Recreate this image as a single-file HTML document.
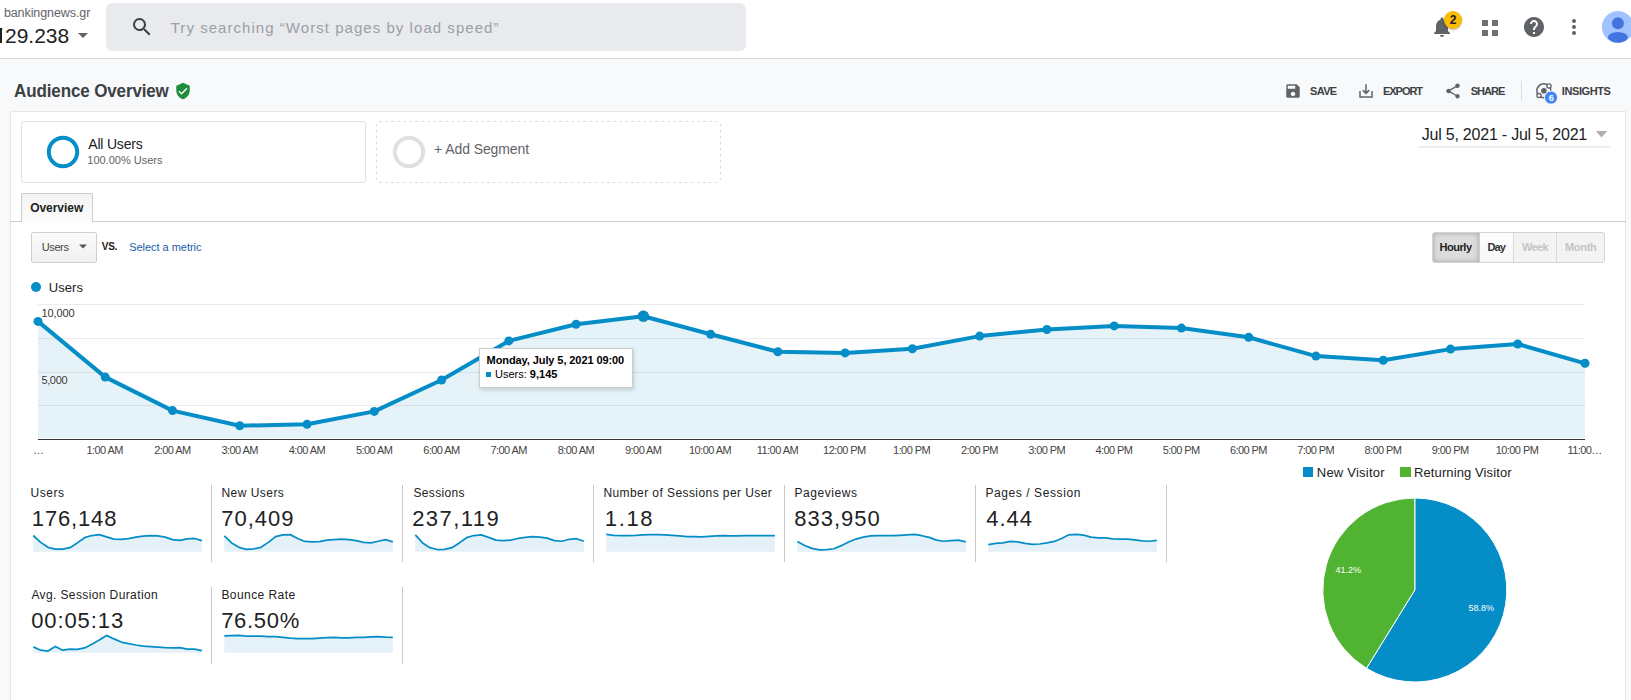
<!DOCTYPE html>
<html><head><meta charset="utf-8"><style>
html,body{margin:0;padding:0;}
body{width:1631px;height:700px;overflow:hidden;position:relative;background:#fff;font-family:"Liberation Sans", sans-serif;}
.t{position:absolute;white-space:nowrap;}
</style></head><body>
<div style="position:absolute;left:0px;top:0px;width:1631px;height:58px;background:#fff;"></div>
<div style="position:absolute;left:0px;top:58px;width:1631px;height:1px;background:#dadce0;"></div>
<div style="position:absolute;left:0px;top:59px;width:1631px;height:641px;background:#f8f9fa;"></div>
<div class="t" style="left:3.90px;top:7.02px;font-size:12.5px;line-height:12.5px;color:#5f6368;font-weight:normal;letter-spacing:-0.085px;">bankingnews.gr</div>
<div class="t" style="left:5.00px;top:25.02px;font-size:21px;line-height:21px;color:#202124;font-weight:normal;letter-spacing:0.000px;">29.238</div>
<div style="position:absolute;left:0.4px;top:28.4px;width:1.8px;height:14.4px;background:#202124;"></div>
<svg style="position:absolute;left:0;top:27px" width="4" height="6"><path d="M2.2 1.4 L-1 3.6" stroke="#202124" stroke-width="1.8"/></svg>
<svg style="position:absolute;left:77px;top:32px" width="12" height="8"><path d="M1 1 L11 1 L6 6 Z" fill="#5f6368"/></svg>
<div style="position:absolute;left:106px;top:3px;width:640px;height:48px;background:#e8eaed;border-radius:6px;"></div>
<svg style="position:absolute;left:130px;top:15px" width="24" height="24" viewBox="0 0 24 24"><path fill="#3c4043" d="M15.5 14h-.79l-.28-.27A6.471 6.471 0 0 0 16 9.5 6.5 6.5 0 1 0 9.5 16c1.61 0 3.09-.59 4.23-1.57l.27.28v.79l5 4.99L20.49 19l-4.99-5zm-6 0C7.01 14 5 11.99 5 9.5S7.01 5 9.5 5 14 7.01 14 9.5 11.99 14 9.5 14z"/></svg>
<div class="t" style="left:170.70px;top:19.50px;font-size:15px;line-height:15px;color:#9aa0a6;font-weight:normal;letter-spacing:1.045px;">Try searching “Worst pages by load speed”</div>
<svg style="position:absolute;left:1430px;top:15px" width="24" height="24" viewBox="0 0 24 24"><path fill="#5f6368" d="M12 22c1.1 0 2-.9 2-2h-4c0 1.1.9 2 2 2zm6-6v-5c0-3.07-1.64-5.64-4.5-6.32V4c0-.83-.67-1.5-1.5-1.5s-1.5.67-1.5 1.5v.68C7.63 5.36 6 7.92 6 11v5l-2 2v1h16v-1l-2-2z"/></svg>
<div style="position:absolute;left:1444px;top:11px;width:18px;height:18px;border-radius:50%;background:#fbbc04;box-shadow:0 1px 2px rgba(0,0,0,.3);"></div>
<div class="t" style="left:1153.20px;width:600px;text-align:center;top:14.44px;font-size:12px;line-height:12px;color:#202124;font-weight:bold;letter-spacing:0.000px;">2</div>
<div style="position:absolute;left:1482px;top:20px;width:6px;height:6px;background:#6f6f6f;"></div>
<div style="position:absolute;left:1492px;top:20px;width:6px;height:6px;background:#6f6f6f;"></div>
<div style="position:absolute;left:1482px;top:30px;width:6px;height:6px;background:#6f6f6f;"></div>
<div style="position:absolute;left:1492px;top:30px;width:6px;height:6px;background:#6f6f6f;"></div>
<svg style="position:absolute;left:1522px;top:15px" width="24" height="24" viewBox="0 0 24 24"><path fill="#5f6368" d="M12 2C6.48 2 2 6.48 2 12s4.48 10 10 10 10-4.48 10-10S17.52 2 12 2zm1 17h-2v-2h2v2zm2.07-7.75l-.9.92C13.45 12.9 13 13.5 13 15h-2v-.5c0-1.1.45-2.1 1.17-2.83l1.24-1.26c.37-.36.59-.86.59-1.41 0-1.1-.9-2-2-2s-2 .9-2 2H8c0-2.21 1.79-4 4-4s4 1.79 4 4c0 .88-.36 1.68-.93 2.25z"/></svg>
<div style="position:absolute;left:1572px;top:18.7px;width:4px;height:4px;background:#5f6368;border-radius:50%;"></div>
<div style="position:absolute;left:1572px;top:24.9px;width:4px;height:4px;background:#5f6368;border-radius:50%;"></div>
<div style="position:absolute;left:1572px;top:31.1px;width:4px;height:4px;background:#5f6368;border-radius:50%;"></div>
<svg style="position:absolute;left:1601px;top:11px" width="32" height="32" viewBox="0 0 32 32"><circle cx="16.9" cy="16" r="16" fill="#a0c3ff"/><circle cx="16.9" cy="12.2" r="6" fill="#4374e0"/><ellipse cx="16.9" cy="26.3" rx="10" ry="5.4" fill="#4374e0"/></svg>
<div class="t" style="left:14.10px;top:82.61px;font-size:17px;line-height:17px;color:#3c4043;font-weight:bold;letter-spacing:-0.131px;transform:scaleY(1.08);transform-origin:0 14.4px;">Audience Overview</div>
<svg style="position:absolute;left:174px;top:82px" width="18" height="18" viewBox="0 0 24 24"><path fill="#1e8e3e" d="M12 1L3 5v6c0 5.55 3.84 10.74 9 12 5.16-1.26 9-6.45 9-12V5l-9-4zm-2 16l-4-4 1.41-1.41L10 14.17l6.59-6.59L18 9l-8 8z"/></svg>
<svg style="position:absolute;left:1284px;top:82px" width="18" height="18" viewBox="0 0 24 24"><path fill="#5f6368" d="M17 3H5c-1.11 0-2 .9-2 2v14c0 1.1.89 2 2 2h14c1.1 0 2-.9 2-2V7l-4-4zm-5 16c-1.66 0-3-1.34-3-3s1.34-3 3-3 3 1.34 3 3-1.34 3-3 3zm3-10H5V5h10v4z"/></svg>
<div class="t" style="left:1310.10px;top:85.89px;font-size:11px;line-height:11px;color:#3c4043;font-weight:bold;letter-spacing:-0.700px;">SAVE</div>
<svg style="position:absolute;left:1357px;top:82px" width="18" height="18" viewBox="0 0 24 24"><path fill="#5f6368" d="M19 12v7H5v-7H3v9h18v-9h-2zm-6 .67l2.59-2.58L17 11.5l-5 5-5-5 1.41-1.41L11 12.67V3h2v9.67z"/></svg>
<div class="t" style="left:1383.00px;top:85.89px;font-size:11px;line-height:11px;color:#3c4043;font-weight:bold;letter-spacing:-1.040px;">EXPORT</div>
<svg style="position:absolute;left:1444px;top:82px" width="18" height="18" viewBox="0 0 24 24"><path fill="#5f6368" d="M18 16.08c-.76 0-1.44.3-1.96.77L8.91 12.7c.05-.23.09-.46.09-.7s-.04-.47-.09-.7l7.05-4.11c.54.5 1.25.81 2.04.81 1.66 0 3-1.34 3-3s-1.34-3-3-3-3 1.34-3 3c0 .24.04.47.09.7L8.04 9.81C7.5 9.31 6.79 9 6 9c-1.66 0-3 1.34-3 3s1.34 3 3 3c.79 0 1.5-.31 2.04-.81l7.12 4.16c-.05.21-.08.43-.08.65 0 1.61 1.31 2.92 2.92 2.92s2.92-1.31 2.92-2.92-1.31-2.92-2.92-2.92z"/></svg>
<div class="t" style="left:1470.70px;top:85.89px;font-size:11px;line-height:11px;color:#3c4043;font-weight:bold;letter-spacing:-0.975px;">SHARE</div>
<div style="position:absolute;left:1521px;top:81px;width:1px;height:20px;background:#dadce0;"></div>
<svg style="position:absolute;left:1530px;top:78px" width="32" height="28" viewBox="0 0 32 28"><circle cx="13.8" cy="12.8" r="7" fill="none" stroke="#5f6368" stroke-width="1.5"/><circle cx="13.9" cy="12.8" r="2.8" fill="#5f6368"/><circle cx="9" cy="17.6" r="2.1" fill="#f8f9fa" stroke="#5f6368" stroke-width="1.3"/><circle cx="19" cy="8" r="2.1" fill="#f8f9fa" stroke="#5f6368" stroke-width="1.3"/><circle cx="21" cy="19.6" r="6.6" fill="#4285f4" stroke="#f8f9fa" stroke-width="1"/></svg>
<div class="t" style="left:1251.20px;width:600px;text-align:center;top:94.18px;font-size:9px;line-height:9px;color:#fff;font-weight:bold;letter-spacing:0.000px;">6</div>
<div class="t" style="left:1561.80px;top:85.89px;font-size:11px;line-height:11px;color:#3c4043;font-weight:bold;letter-spacing:-0.400px;">INSIGHTS</div>
<div style="position:absolute;left:10px;top:111px;width:1616px;height:600px;background:#fff;border:1px solid #e6e6e6;box-sizing:border-box;"></div>
<div style="position:absolute;left:21px;top:121px;width:345px;height:62px;border:1px solid #e0e0e0;border-radius:3px;box-sizing:border-box;"></div>
<svg style="position:absolute;left:43px;top:132px" width="40" height="40"><circle cx="20" cy="20" r="14.2" fill="none" stroke="#058dc7" stroke-width="4"/></svg>
<div class="t" style="left:88.30px;top:137.45px;font-size:14px;line-height:14px;color:#202124;font-weight:normal;letter-spacing:-0.200px;">All Users</div>
<div class="t" style="left:87.30px;top:154.79px;font-size:11px;line-height:11px;color:#5f6368;font-weight:normal;letter-spacing:0.000px;">100.00% Users</div>
<svg style="position:absolute;left:370px;top:115px" width="360" height="75"><rect x="6.5" y="6.5" width="344" height="61" rx="3" fill="none" stroke="#d9d9d9" stroke-width="1" stroke-dasharray="2.5 3.5"/></svg>
<svg style="position:absolute;left:389px;top:132px" width="40" height="40"><circle cx="20" cy="20" r="14.2" fill="none" stroke="#e0e0e0" stroke-width="4"/></svg>
<div class="t" style="left:434.10px;top:142.45px;font-size:14px;line-height:14px;color:#5f6368;font-weight:normal;letter-spacing:-0.092px;">+ Add Segment</div>
<div class="t" style="left:1421.70px;top:126.76px;font-size:16px;line-height:16px;color:#202124;font-weight:normal;letter-spacing:-0.217px;">Jul 5, 2021 - Jul 5, 2021</div>
<svg style="position:absolute;left:1595px;top:130px" width="13" height="9"><path d="M0.8 1 L12.2 1 L6.5 7.4 Z" fill="#b0b0b0"/></svg>
<div style="position:absolute;left:1419px;top:146px;width:191px;height:2px;background:#eeeeee;"></div>
<div style="position:absolute;left:21px;top:193px;width:72px;height:29px;background:linear-gradient(#f3f3f3,#fcfcfc);border:1px solid #cccccc;border-bottom:none;border-radius:2px 2px 0 0;box-sizing:border-box;"></div>
<div style="position:absolute;left:10px;top:221px;width:1616px;height:1px;background:#cccccc;"></div>
<div style="position:absolute;left:22px;top:221px;width:70px;height:1px;background:#fff;"></div>
<div class="t" style="left:30.20px;top:202.14px;font-size:12px;line-height:12px;color:#222;font-weight:bold;letter-spacing:-0.043px;">Overview</div>
<div style="position:absolute;left:31px;top:232px;width:66px;height:31px;background:linear-gradient(#fafafa,#f1f1f1);border:1px solid #cfcfcf;border-radius:2px;box-sizing:border-box;"></div>
<div class="t" style="left:41.70px;top:241.79px;font-size:11px;line-height:11px;color:#444;font-weight:normal;letter-spacing:-0.375px;">Users</div>
<svg style="position:absolute;left:79px;top:244px" width="9" height="6"><path d="M0 0.5 L8 0.5 L4 4.5 Z" fill="#555"/></svg>
<div class="t" style="left:101.80px;top:241.84px;font-size:10px;line-height:10px;color:#222;font-weight:bold;letter-spacing:-0.300px;">VS.</div>
<div class="t" style="left:129.20px;top:241.79px;font-size:11px;line-height:11px;color:#1a5ea8;font-weight:normal;letter-spacing:-0.029px;">Select a metric</div>
<div style="position:absolute;left:1432px;top:232px;width:173px;height:31px;border:1px solid #d4d4d4;border-radius:3px;background:#f3f3f3;box-sizing:border-box;"></div>
<div style="position:absolute;left:1433px;top:233px;width:46px;height:29px;background:#dcdcdc;box-shadow:inset 0 0 5px rgba(0,0,0,.28);border-radius:2px 0 0 2px;"></div>
<div style="position:absolute;left:1479px;top:233px;width:34px;height:29px;background:linear-gradient(#fefefe,#f6f6f6);"></div>
<div style="position:absolute;left:1479px;top:233px;width:1px;height:29px;background:#cfcfcf;"></div>
<div style="position:absolute;left:1513px;top:233px;width:1px;height:29px;background:#d9d9d9;"></div>
<div style="position:absolute;left:1556px;top:233px;width:1px;height:29px;background:#d9d9d9;"></div>
<div class="t" style="left:1439.50px;top:241.89px;font-size:11px;line-height:11px;color:#222;font-weight:bold;letter-spacing:-0.460px;">Hourly</div>
<div class="t" style="left:1487.50px;top:241.89px;font-size:11px;line-height:11px;color:#333;font-weight:bold;letter-spacing:-0.900px;">Day</div>
<div class="t" style="left:1522.00px;top:241.89px;font-size:11px;line-height:11px;color:#c4c4c4;font-weight:bold;letter-spacing:-0.600px;">Week</div>
<div class="t" style="left:1565.00px;top:241.89px;font-size:11px;line-height:11px;color:#c4c4c4;font-weight:bold;letter-spacing:-0.325px;">Month</div>
<div style="position:absolute;left:31px;top:282px;width:10px;height:10px;border-radius:50%;background:#058dc7;"></div>
<div class="t" style="left:48.80px;top:281.30px;font-size:13px;line-height:13px;color:#222;font-weight:normal;letter-spacing:0.050px;">Users</div>
<svg style="position:absolute;left:0;top:0" width="1631" height="700"><rect x="38" y="304.0" width="1547" height="1" fill="#ebebeb"/><rect x="38" y="338.0" width="1547" height="1" fill="#ebebeb"/><rect x="38" y="372.0" width="1547" height="1" fill="#ebebeb"/><rect x="38" y="405.0" width="1547" height="1" fill="#ebebeb"/><polygon points="38,438 38.00,321.40 105.26,377.10 172.52,410.60 239.78,425.70 307.04,424.30 374.30,411.40 441.57,380.00 508.83,340.90 576.09,324.20 643.35,316.20 710.61,334.20 777.87,351.70 845.13,352.90 912.39,348.80 979.65,336.10 1046.91,329.50 1114.17,325.90 1181.43,328.10 1248.70,337.30 1315.96,356.10 1383.22,360.20 1450.48,349.10 1517.74,344.00 1585.00,363.30 1585,438" fill="#058dc7" fill-opacity="0.105"/><polyline points="38.00,321.40 105.26,377.10 172.52,410.60 239.78,425.70 307.04,424.30 374.30,411.40 441.57,380.00 508.83,340.90 576.09,324.20 643.35,316.20 710.61,334.20 777.87,351.70 845.13,352.90 912.39,348.80 979.65,336.10 1046.91,329.50 1114.17,325.90 1181.43,328.10 1248.70,337.30 1315.96,356.10 1383.22,360.20 1450.48,349.10 1517.74,344.00 1585.00,363.30" fill="none" stroke="#058dc7" stroke-width="4" stroke-linejoin="round"/><circle cx="38.00" cy="321.40" r="4.5" fill="#058dc7"/><circle cx="105.26" cy="377.10" r="4.5" fill="#058dc7"/><circle cx="172.52" cy="410.60" r="4.5" fill="#058dc7"/><circle cx="239.78" cy="425.70" r="4.5" fill="#058dc7"/><circle cx="307.04" cy="424.30" r="4.5" fill="#058dc7"/><circle cx="374.30" cy="411.40" r="4.5" fill="#058dc7"/><circle cx="441.57" cy="380.00" r="4.5" fill="#058dc7"/><circle cx="508.83" cy="340.90" r="4.5" fill="#058dc7"/><circle cx="576.09" cy="324.20" r="4.5" fill="#058dc7"/><circle cx="643.35" cy="316.20" r="5.6" fill="#058dc7" stroke="rgba(0,0,0,0.12)" stroke-width="1"/><circle cx="710.61" cy="334.20" r="4.5" fill="#058dc7"/><circle cx="777.87" cy="351.70" r="4.5" fill="#058dc7"/><circle cx="845.13" cy="352.90" r="4.5" fill="#058dc7"/><circle cx="912.39" cy="348.80" r="4.5" fill="#058dc7"/><circle cx="979.65" cy="336.10" r="4.5" fill="#058dc7"/><circle cx="1046.91" cy="329.50" r="4.5" fill="#058dc7"/><circle cx="1114.17" cy="325.90" r="4.5" fill="#058dc7"/><circle cx="1181.43" cy="328.10" r="4.5" fill="#058dc7"/><circle cx="1248.70" cy="337.30" r="4.5" fill="#058dc7"/><circle cx="1315.96" cy="356.10" r="4.5" fill="#058dc7"/><circle cx="1383.22" cy="360.20" r="4.5" fill="#058dc7"/><circle cx="1450.48" cy="349.10" r="4.5" fill="#058dc7"/><circle cx="1517.74" cy="344.00" r="4.5" fill="#058dc7"/><circle cx="1585.00" cy="363.30" r="4.5" fill="#058dc7"/><rect x="38" y="439" width="1547" height="1" fill="#333"/></svg>
<div class="t" style="left:41.60px;top:307.99px;font-size:11px;line-height:11px;color:#333;font-weight:normal;letter-spacing:-0.140px;text-shadow:0 0 2px #fff,0 0 2px #fff;">10,000</div>
<div class="t" style="left:41.40px;top:374.69px;font-size:11px;line-height:11px;color:#333;font-weight:normal;letter-spacing:-0.350px;text-shadow:0 0 2px #fff,0 0 2px #fff;">5,000</div>
<div class="t" style="left:33px;top:444.69px;font-size:11px;line-height:11px;color:#444;font-weight:normal;letter-spacing:0.000px;">…</div>
<div class="t" style="left:86.42px;top:444.89px;font-size:11px;line-height:11px;color:#444;font-weight:normal;letter-spacing:-0.552px;">1:00 AM</div>
<div class="t" style="left:154.22px;top:444.89px;font-size:11px;line-height:11px;color:#444;font-weight:normal;letter-spacing:-0.567px;">2:00 AM</div>
<div class="t" style="left:221.48px;top:444.89px;font-size:11px;line-height:11px;color:#444;font-weight:normal;letter-spacing:-0.567px;">3:00 AM</div>
<div class="t" style="left:288.74px;top:444.89px;font-size:11px;line-height:11px;color:#444;font-weight:normal;letter-spacing:-0.567px;">4:00 AM</div>
<div class="t" style="left:356.00px;top:444.89px;font-size:11px;line-height:11px;color:#444;font-weight:normal;letter-spacing:-0.567px;">5:00 AM</div>
<div class="t" style="left:423.27px;top:444.89px;font-size:11px;line-height:11px;color:#444;font-weight:normal;letter-spacing:-0.567px;">6:00 AM</div>
<div class="t" style="left:490.53px;top:444.89px;font-size:11px;line-height:11px;color:#444;font-weight:normal;letter-spacing:-0.567px;">7:00 AM</div>
<div class="t" style="left:557.79px;top:444.89px;font-size:11px;line-height:11px;color:#444;font-weight:normal;letter-spacing:-0.567px;">8:00 AM</div>
<div class="t" style="left:625.05px;top:444.89px;font-size:11px;line-height:11px;color:#444;font-weight:normal;letter-spacing:-0.567px;">9:00 AM</div>
<div class="t" style="left:689.02px;top:444.89px;font-size:11px;line-height:11px;color:#444;font-weight:normal;letter-spacing:-0.546px;">10:00 AM</div>
<div class="t" style="left:756.74px;top:444.89px;font-size:11px;line-height:11px;color:#444;font-weight:normal;letter-spacing:-0.534px;">11:00 AM</div>
<div class="t" style="left:823.09px;top:444.89px;font-size:11px;line-height:11px;color:#444;font-weight:normal;letter-spacing:-0.559px;">12:00 PM</div>
<div class="t" style="left:893.09px;top:444.89px;font-size:11px;line-height:11px;color:#444;font-weight:normal;letter-spacing:-0.567px;">1:00 PM</div>
<div class="t" style="left:960.89px;top:444.89px;font-size:11px;line-height:11px;color:#444;font-weight:normal;letter-spacing:-0.581px;">2:00 PM</div>
<div class="t" style="left:1028.16px;top:444.89px;font-size:11px;line-height:11px;color:#444;font-weight:normal;letter-spacing:-0.581px;">3:00 PM</div>
<div class="t" style="left:1095.42px;top:444.89px;font-size:11px;line-height:11px;color:#444;font-weight:normal;letter-spacing:-0.581px;">4:00 PM</div>
<div class="t" style="left:1162.68px;top:444.89px;font-size:11px;line-height:11px;color:#444;font-weight:normal;letter-spacing:-0.581px;">5:00 PM</div>
<div class="t" style="left:1229.94px;top:444.89px;font-size:11px;line-height:11px;color:#444;font-weight:normal;letter-spacing:-0.581px;">6:00 PM</div>
<div class="t" style="left:1297.20px;top:444.89px;font-size:11px;line-height:11px;color:#444;font-weight:normal;letter-spacing:-0.581px;">7:00 PM</div>
<div class="t" style="left:1364.46px;top:444.89px;font-size:11px;line-height:11px;color:#444;font-weight:normal;letter-spacing:-0.581px;">8:00 PM</div>
<div class="t" style="left:1431.72px;top:444.89px;font-size:11px;line-height:11px;color:#444;font-weight:normal;letter-spacing:-0.581px;">9:00 PM</div>
<div class="t" style="left:1495.69px;top:444.89px;font-size:11px;line-height:11px;color:#444;font-weight:normal;letter-spacing:-0.559px;">10:00 PM</div>
<div class="t" style="left:1567.53px;top:444.89px;font-size:11px;line-height:11px;color:#444;font-weight:normal;letter-spacing:-0.612px;">11:00…</div>
<div style="position:absolute;left:479px;top:348px;width:154px;height:40px;background:#fff;border:1px solid #cccccc;box-shadow:1px 2px 4px rgba(0,0,0,.16);box-sizing:border-box;"></div>
<div class="t" style="left:486.60px;top:354.99px;font-size:11px;line-height:11px;color:#000;font-weight:bold;letter-spacing:-0.088px;">Monday, July 5, 2021 09:00</div>
<div style="position:absolute;left:486px;top:372px;width:5px;height:5px;background:#058dc7;"></div>
<div class="t" style="left:495.00px;top:368.89px;font-size:11px;line-height:11px;color:#000;font-weight:normal;letter-spacing:0.000px;">Users: <b>9,145</b></div>
<div class="t" style="left:30.40px;top:487.04px;font-size:12px;line-height:12px;color:#222;font-weight:normal;letter-spacing:0.575px;">Users</div>
<div class="t" style="left:31.80px;top:508.28px;font-size:22px;line-height:22px;color:#222;font-weight:normal;letter-spacing:0.850px;">176,148</div>
<div style="position:absolute;left:211px;top:485px;width:1px;height:77px;background:#c8c8c8;"></div>
<div class="t" style="left:221.40px;top:487.04px;font-size:12px;line-height:12px;color:#222;font-weight:normal;letter-spacing:0.475px;">New Users</div>
<div class="t" style="left:221.20px;top:508.28px;font-size:22px;line-height:22px;color:#222;font-weight:normal;letter-spacing:1.000px;">70,409</div>
<div style="position:absolute;left:402px;top:485px;width:1px;height:77px;background:#c8c8c8;"></div>
<div class="t" style="left:413.40px;top:487.04px;font-size:12px;line-height:12px;color:#222;font-weight:normal;letter-spacing:0.357px;">Sessions</div>
<div class="t" style="left:412.20px;top:508.28px;font-size:22px;line-height:22px;color:#222;font-weight:normal;letter-spacing:1.433px;">237,119</div>
<div style="position:absolute;left:593px;top:485px;width:1px;height:77px;background:#c8c8c8;"></div>
<div class="t" style="left:603.40px;top:487.04px;font-size:12px;line-height:12px;color:#222;font-weight:normal;letter-spacing:0.423px;">Number of Sessions per User</div>
<div class="t" style="left:604.80px;top:508.28px;font-size:22px;line-height:22px;color:#222;font-weight:normal;letter-spacing:1.633px;">1.18</div>
<div style="position:absolute;left:784px;top:485px;width:1px;height:77px;background:#c8c8c8;"></div>
<div class="t" style="left:794.40px;top:487.04px;font-size:12px;line-height:12px;color:#222;font-weight:normal;letter-spacing:0.575px;">Pageviews</div>
<div class="t" style="left:794.20px;top:508.28px;font-size:22px;line-height:22px;color:#222;font-weight:normal;letter-spacing:1.017px;">833,950</div>
<div style="position:absolute;left:975px;top:485px;width:1px;height:77px;background:#c8c8c8;"></div>
<div class="t" style="left:985.40px;top:487.04px;font-size:12px;line-height:12px;color:#222;font-weight:normal;letter-spacing:0.586px;">Pages / Session</div>
<div class="t" style="left:986.20px;top:508.28px;font-size:22px;line-height:22px;color:#222;font-weight:normal;letter-spacing:1.033px;">4.44</div>
<div style="position:absolute;left:1166px;top:485px;width:1px;height:77px;background:#c8c8c8;"></div>
<div class="t" style="left:31.40px;top:589.04px;font-size:12px;line-height:12px;color:#222;font-weight:normal;letter-spacing:0.390px;">Avg. Session Duration</div>
<div class="t" style="left:31.20px;top:610.28px;font-size:22px;line-height:22px;color:#222;font-weight:normal;letter-spacing:0.900px;">00:05:13</div>
<div style="position:absolute;left:211px;top:587px;width:1px;height:77px;background:#c8c8c8;"></div>
<div class="t" style="left:221.40px;top:589.04px;font-size:12px;line-height:12px;color:#222;font-weight:normal;letter-spacing:0.430px;">Bounce Rate</div>
<div class="t" style="left:221.20px;top:610.28px;font-size:22px;line-height:22px;color:#222;font-weight:normal;letter-spacing:0.700px;">76.50%</div>
<div style="position:absolute;left:402px;top:587px;width:1px;height:77px;background:#c8c8c8;"></div>
<svg style="position:absolute;left:0;top:0" width="1631" height="700"><polygon points="33.30,551.73 33.30,535.51 40.63,542.35 47.95,547.32 55.28,549.19 62.61,549.19 69.94,547.65 77.27,542.90 84.59,537.71 91.92,535.51 99.25,534.62 106.58,536.83 113.91,539.04 121.23,539.26 128.56,538.71 135.89,537.05 143.22,536.17 150.55,535.73 157.87,535.95 165.20,537.16 172.53,539.70 179.86,540.47 187.19,538.82 194.51,538.49 201.84,540.69 201.84,551.73" fill="#e5f1f8"/><polyline points="33.30,535.51 40.63,542.35 47.95,547.32 55.28,549.19 62.61,549.19 69.94,547.65 77.27,542.90 84.59,537.71 91.92,535.51 99.25,534.62 106.58,536.83 113.91,539.04 121.23,539.26 128.56,538.71 135.89,537.05 143.22,536.17 150.55,535.73 157.87,535.95 165.20,537.16 172.53,539.70 179.86,540.47 187.19,538.82 194.51,538.49 201.84,540.69" fill="none" stroke="#058dc7" stroke-width="1.75" stroke-linejoin="round" stroke-linecap="butt"/><polygon points="224.30,551.73 224.30,535.95 231.63,542.90 238.95,547.32 246.28,549.30 253.61,548.97 260.94,547.32 268.27,542.35 275.59,536.61 282.92,534.84 290.25,534.62 297.58,538.49 304.91,541.47 312.23,541.80 319.56,541.69 326.89,540.14 334.22,539.59 341.55,539.04 348.87,539.59 356.20,540.69 363.53,542.35 370.86,542.90 378.19,541.25 385.51,539.59 392.84,541.80 392.84,551.73" fill="#e5f1f8"/><polyline points="224.30,535.95 231.63,542.90 238.95,547.32 246.28,549.30 253.61,548.97 260.94,547.32 268.27,542.35 275.59,536.61 282.92,534.84 290.25,534.62 297.58,538.49 304.91,541.47 312.23,541.80 319.56,541.69 326.89,540.14 334.22,539.59 341.55,539.04 348.87,539.59 356.20,540.69 363.53,542.35 370.86,542.90 378.19,541.25 385.51,539.59 392.84,541.80" fill="none" stroke="#058dc7" stroke-width="1.75" stroke-linejoin="round" stroke-linecap="butt"/><polygon points="415.30,551.73 415.30,534.84 422.63,542.90 429.95,547.65 437.28,549.52 444.61,549.30 451.94,547.65 459.27,542.90 466.59,537.71 473.92,535.51 481.25,534.84 488.58,537.38 495.91,540.14 503.23,540.69 510.56,540.14 517.89,538.49 525.22,537.38 532.55,536.61 539.87,537.05 547.20,538.15 554.53,540.69 561.86,541.25 569.19,539.26 576.51,538.71 583.84,541.25 583.84,551.73" fill="#e5f1f8"/><polyline points="415.30,534.84 422.63,542.90 429.95,547.65 437.28,549.52 444.61,549.30 451.94,547.65 459.27,542.90 466.59,537.71 473.92,535.51 481.25,534.84 488.58,537.38 495.91,540.14 503.23,540.69 510.56,540.14 517.89,538.49 525.22,537.38 532.55,536.61 539.87,537.05 547.20,538.15 554.53,540.69 561.86,541.25 569.19,539.26 576.51,538.71 583.84,541.25" fill="none" stroke="#058dc7" stroke-width="1.75" stroke-linejoin="round" stroke-linecap="butt"/><polygon points="606.30,551.73 606.30,534.40 613.63,535.28 620.95,535.51 628.28,535.73 635.61,535.40 642.94,534.84 650.27,534.62 657.59,534.62 664.92,534.84 672.25,535.28 679.58,535.95 686.91,536.61 694.23,536.61 701.56,536.83 708.89,536.39 716.22,535.95 723.55,535.73 730.87,535.95 738.20,535.95 745.53,535.73 752.86,535.73 760.19,535.51 767.51,535.51 774.84,535.51 774.84,551.73" fill="#e5f1f8"/><polyline points="606.30,534.40 613.63,535.28 620.95,535.51 628.28,535.73 635.61,535.40 642.94,534.84 650.27,534.62 657.59,534.62 664.92,534.84 672.25,535.28 679.58,535.95 686.91,536.61 694.23,536.61 701.56,536.83 708.89,536.39 716.22,535.95 723.55,535.73 730.87,535.95 738.20,535.95 745.53,535.73 752.86,535.73 760.19,535.51 767.51,535.51 774.84,535.51" fill="none" stroke="#058dc7" stroke-width="1.75" stroke-linejoin="round" stroke-linecap="butt"/><polygon points="797.30,551.73 797.30,541.47 804.63,545.44 811.95,548.42 819.28,549.85 826.61,549.52 833.94,548.75 841.27,545.66 848.59,542.02 855.92,539.04 863.25,537.05 870.58,535.95 877.91,535.73 885.23,535.51 892.56,535.73 899.89,535.28 907.22,534.84 914.55,534.40 921.87,535.73 929.20,537.38 936.53,540.14 943.86,541.25 951.19,540.69 958.51,540.14 965.84,541.80 965.84,551.73" fill="#e5f1f8"/><polyline points="797.30,541.47 804.63,545.44 811.95,548.42 819.28,549.85 826.61,549.52 833.94,548.75 841.27,545.66 848.59,542.02 855.92,539.04 863.25,537.05 870.58,535.95 877.91,535.73 885.23,535.51 892.56,535.73 899.89,535.28 907.22,534.84 914.55,534.40 921.87,535.73 929.20,537.38 936.53,540.14 943.86,541.25 951.19,540.69 958.51,540.14 965.84,541.80" fill="none" stroke="#058dc7" stroke-width="1.75" stroke-linejoin="round" stroke-linecap="butt"/><polygon points="988.30,551.73 988.30,544.56 995.63,543.45 1002.95,542.90 1010.28,541.47 1017.61,541.80 1024.94,543.45 1032.27,544.34 1039.59,544.00 1046.92,542.90 1054.25,541.47 1061.58,538.49 1068.91,534.84 1076.23,534.40 1083.56,535.17 1090.89,537.05 1098.22,537.93 1105.55,537.93 1112.87,538.82 1120.20,539.04 1127.53,539.04 1134.86,539.92 1142.19,540.80 1149.51,541.25 1156.84,540.36 1156.84,551.73" fill="#e5f1f8"/><polyline points="988.30,544.56 995.63,543.45 1002.95,542.90 1010.28,541.47 1017.61,541.80 1024.94,543.45 1032.27,544.34 1039.59,544.00 1046.92,542.90 1054.25,541.47 1061.58,538.49 1068.91,534.84 1076.23,534.40 1083.56,535.17 1090.89,537.05 1098.22,537.93 1105.55,537.93 1112.87,538.82 1120.20,539.04 1127.53,539.04 1134.86,539.92 1142.19,540.80 1149.51,541.25 1156.84,540.36" fill="none" stroke="#058dc7" stroke-width="1.75" stroke-linejoin="round" stroke-linecap="butt"/><polygon points="33.30,652.73 33.30,646.88 40.63,650.19 47.95,651.08 55.28,646.44 62.61,650.19 69.94,649.09 77.27,649.42 84.59,647.98 91.92,644.23 99.25,640.04 106.58,635.40 113.91,638.93 121.23,642.02 128.56,643.57 135.89,645.00 143.22,646.11 150.55,646.66 157.87,647.10 165.20,647.54 172.53,647.76 179.86,647.54 187.19,649.09 194.51,649.09 201.84,650.52 201.84,652.73" fill="#e5f1f8"/><polyline points="33.30,646.88 40.63,650.19 47.95,651.08 55.28,646.44 62.61,650.19 69.94,649.09 77.27,649.42 84.59,647.98 91.92,644.23 99.25,640.04 106.58,635.40 113.91,638.93 121.23,642.02 128.56,643.57 135.89,645.00 143.22,646.11 150.55,646.66 157.87,647.10 165.20,647.54 172.53,647.76 179.86,647.54 187.19,649.09 194.51,649.09 201.84,650.52" fill="none" stroke="#058dc7" stroke-width="1.75" stroke-linejoin="round" stroke-linecap="butt"/><polygon points="224.30,652.73 224.30,635.84 231.63,635.62 238.95,635.40 246.28,636.17 253.61,636.17 260.94,636.17 268.27,636.51 275.59,636.73 282.92,637.28 290.25,638.05 297.58,638.60 304.91,638.71 312.23,638.71 319.56,638.16 326.89,637.61 334.22,637.39 341.55,637.83 348.87,637.83 356.20,637.39 363.53,637.39 370.86,636.95 378.19,636.73 385.51,637.17 392.84,637.28 392.84,652.73" fill="#e5f1f8"/><polyline points="224.30,635.84 231.63,635.62 238.95,635.40 246.28,636.17 253.61,636.17 260.94,636.17 268.27,636.51 275.59,636.73 282.92,637.28 290.25,638.05 297.58,638.60 304.91,638.71 312.23,638.71 319.56,638.16 326.89,637.61 334.22,637.39 341.55,637.83 348.87,637.83 356.20,637.39 363.53,637.39 370.86,636.95 378.19,636.73 385.51,637.17 392.84,637.28" fill="none" stroke="#058dc7" stroke-width="1.75" stroke-linejoin="round" stroke-linecap="butt"/></svg>
<div style="position:absolute;left:1302.8px;top:467.3px;width:10.5px;height:10px;background:#058dc7;"></div>
<div class="t" style="left:1316.80px;top:466.00px;font-size:13px;line-height:13px;color:#222;font-weight:normal;letter-spacing:0.220px;">New Visitor</div>
<div style="position:absolute;left:1400px;top:467.3px;width:10.5px;height:10px;background:#50b432;"></div>
<div class="t" style="left:1414.00px;top:466.00px;font-size:13px;line-height:13px;color:#222;font-weight:normal;letter-spacing:0.106px;">Returning Visitor</div>
<svg style="position:absolute;left:0;top:0" width="1631" height="700"><path d="M1414.8,590.0 L1414.8,498.0 A92.0,92.0 0 1 1 1366.48,668.29 Z" fill="#058dc7" stroke="#fff" stroke-width="1"/><path d="M1414.8,590.0 L1366.48,668.29 A92.0,92.0 0 0 1 1414.8,498.0 Z" fill="#50b432" stroke="#fff" stroke-width="1"/></svg>
<div class="t" style="left:1048.30px;width:600px;text-align:center;top:566.18px;font-size:9px;line-height:9px;color:#fff;font-weight:normal;letter-spacing:0.000px;">41.2%</div>
<div class="t" style="left:1181.30px;width:600px;text-align:center;top:603.98px;font-size:9px;line-height:9px;color:#fff;font-weight:normal;letter-spacing:0.000px;">58.8%</div>
</body></html>
